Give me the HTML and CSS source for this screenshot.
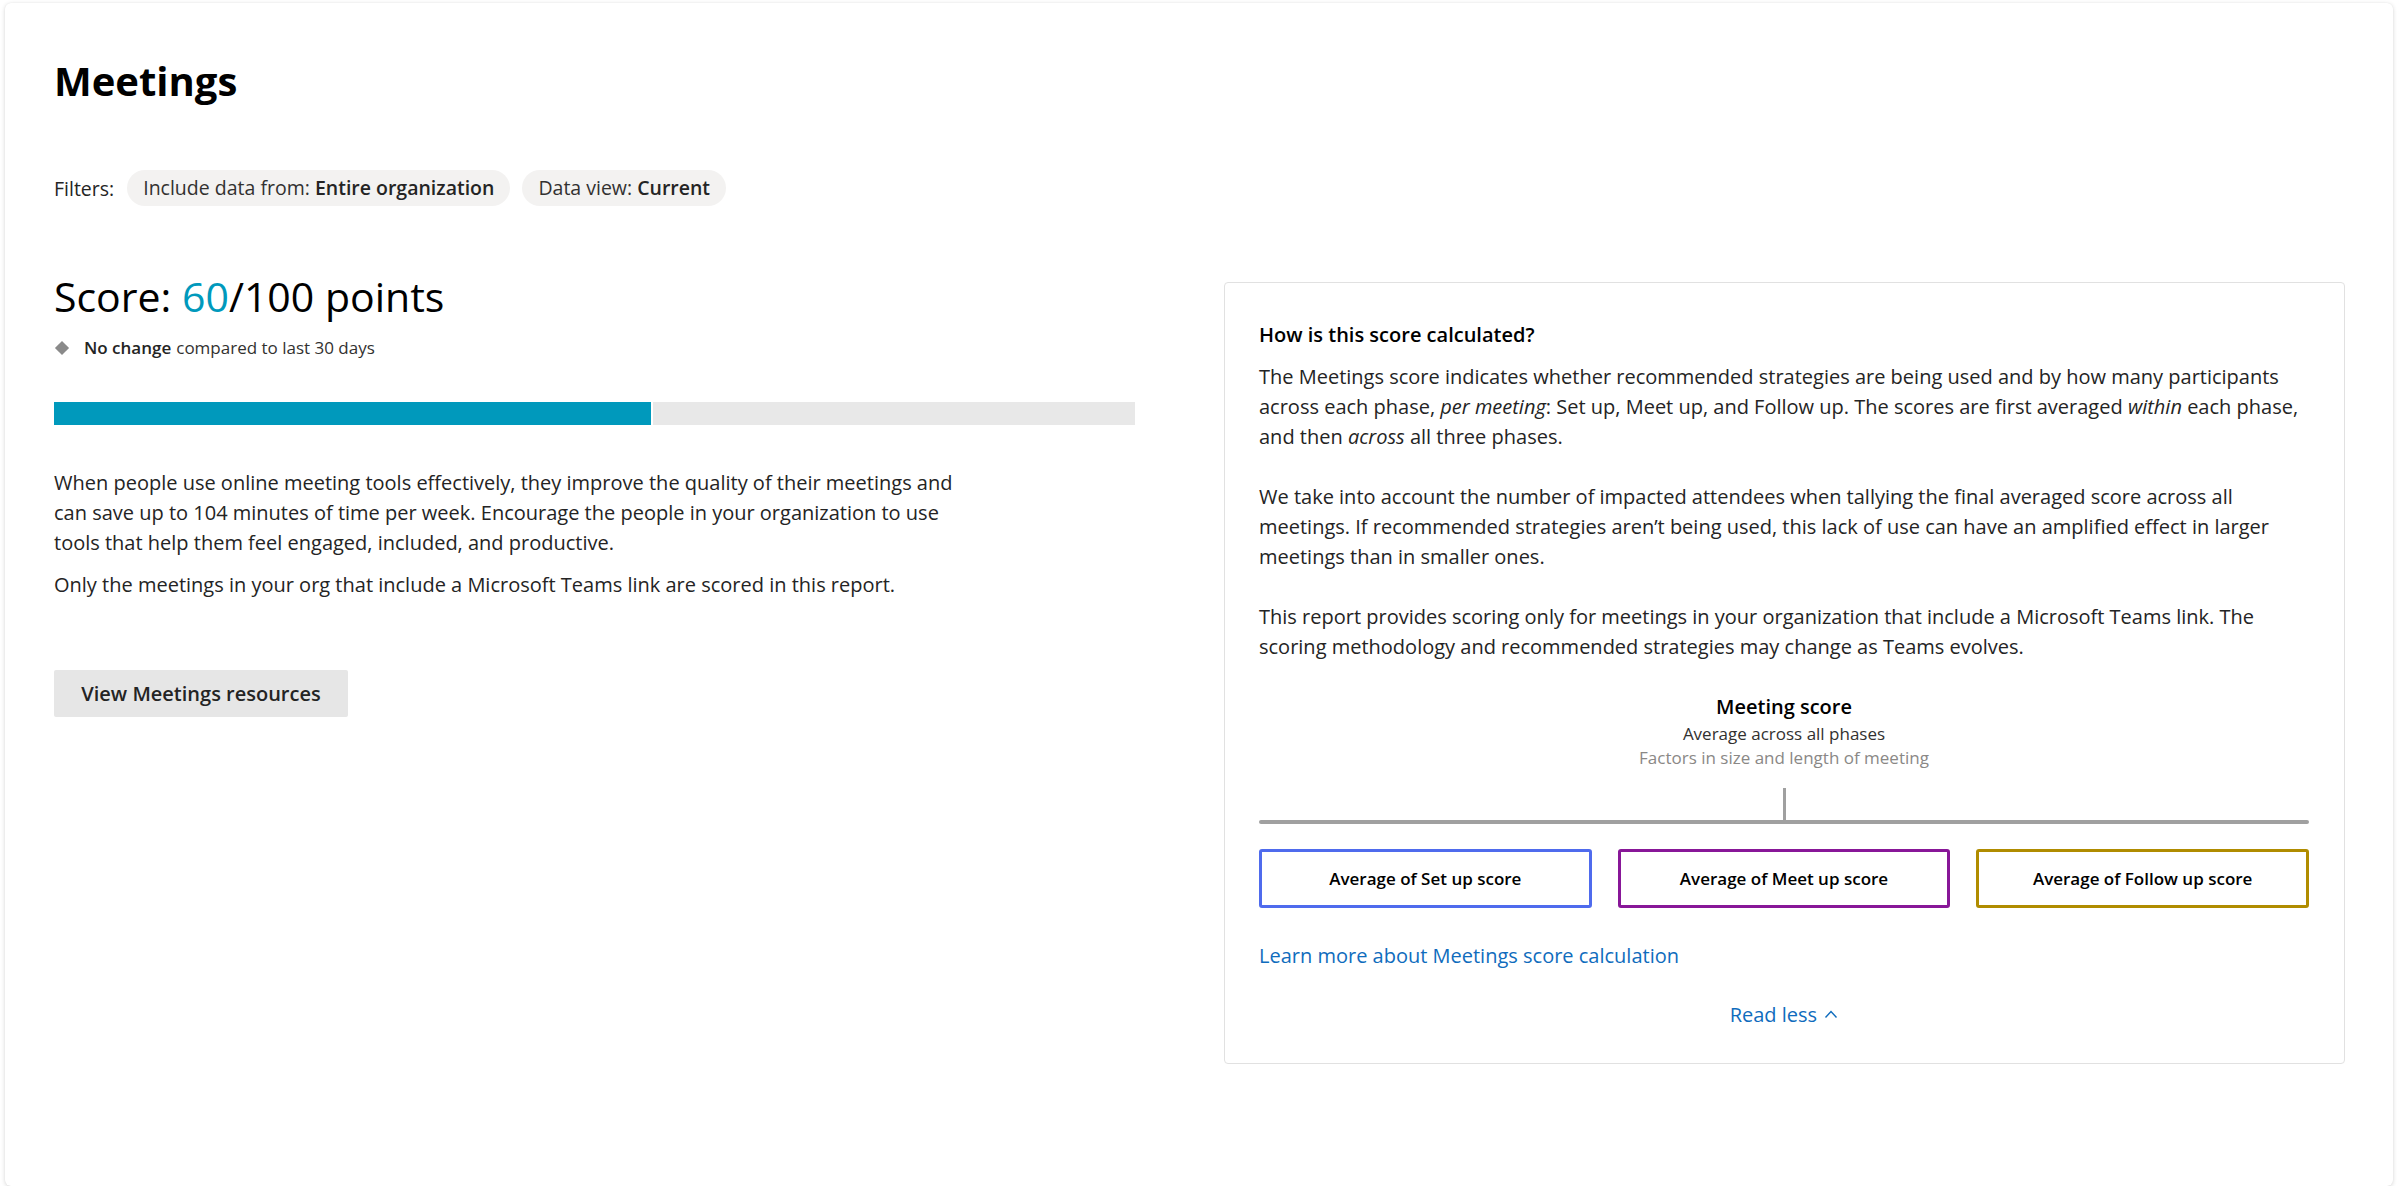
FILE: index.html
```html
<!DOCTYPE html>
<html lang="en">
<head>
<meta charset="utf-8">
<title>Meetings</title>
<link rel="stylesheet" href="styles.css">
</head>
<body>
<main class="page">
  <h1 class="title">Meetings</h1>
  <div class="filters">
    <span class="filters-label">Filters:</span>
    <span class="pill">Include data from: <b>Entire organization</b></span>
    <span class="pill">Data view: <b>Current</b></span>
  </div>
  <div class="columns">
    <section class="left">
      <h2 class="score">Score: <span class="score-num">60</span>/100 points</h2>
      <div class="change">
        <span class="diamond"></span>
        <b>No change</b> compared to last 30 days
      </div>
      <div class="bar"><div class="bar-fill" style="width:55.4%"></div></div>
      <p class="desc">When people use online meeting tools effectively, they improve the quality of their meetings and can save up to 104 minutes of time per week. Encourage the people in your organization to use tools that help them feel engaged, included, and productive.</p>
      <p class="desc">Only the meetings in your org that include a Microsoft Teams link are scored in this report.</p>
      <button class="btn">View Meetings resources</button>
    </section>
    <aside class="card">
      <h3 class="card-title">How is this score calculated?</h3>
      <p class="card-text">The Meetings score indicates whether recommended strategies are being used and by how many participants across each phase, <i>per meeting</i>: Set up, Meet up, and Follow up. The scores are first averaged <i>within</i> each phase, and then <i>across</i> all three phases.</p>
      <p class="card-text">We take into account the number of impacted attendees when tallying the final averaged score across all meetings. If recommended strategies aren’t being used, this lack of use can have an amplified effect in larger meetings than in smaller ones.</p>
      <p class="card-text">This report provides scoring only for meetings in your organization that include a Microsoft Teams link. The scoring methodology and recommended strategies may change as Teams evolves.</p>
      <div class="diagram">
        <div class="diag-title">Meeting score</div>
        <div class="diag-sub">Average across all phases</div>
        <div class="diag-note">Factors in size and length of meeting</div>
        <div class="stem"></div>
        <div class="hline"></div>
        <div class="boxes">
          <div class="box box-blue">Average of Set up score</div>
          <div class="box box-purple">Average of Meet up score</div>
          <div class="box box-gold">Average of Follow up score</div>
        </div>
      </div>
      <a class="link" href="#">Learn more about Meetings score calculation</a>
      <div class="readless"><a class="link" href="#">Read less <svg class="chev" width="14" height="10" viewBox="0 0 14 10"><path d="M1.5 8.5 L7 2.5 L12.5 8.5" fill="none" stroke="currentColor" stroke-width="1.4"/></svg></a></div>
    </aside>
  </div>
</main>
</body>
</html>
```
FILE: styles.css
```css
* { box-sizing: border-box; }
html, body { margin: 0; padding: 0; background: #ffffff; }
body {
  font-family: "Open Sans", "Noto Sans", sans-serif;
  color: #242424;
}
.page {
  margin: 3px 6px 0 5px;
  height: 1183px;
  border-radius: 6px;
  box-shadow: 0 1px 4px rgba(0,0,0,0.16), 0 0 1px rgba(0,0,0,0.08);
  padding: 54px 48px 0 49px;
}
.title {
  margin: 0;
  font-size: 40px;
  font-weight: 700;
  line-height: 48px;
  color: #000;
}
.filters {
  margin-top: 65px;
  display: flex;
  align-items: center;
  gap: 12px;
  font-size: 19.5px;
}
.filters-label { color: #242424; margin-right: 1px; }
.pill {
  background: #f3f2f1;
  border-radius: 18px;
  height: 36px;
  line-height: 36px;
  padding: 0 16px;
  color: #323130;
}
.pill b { font-weight: 600; color: #242424; }
.columns {
  margin-top: 76px;
  display: grid;
  grid-template-columns: 1081px 1fr;
  column-gap: 89px;
  align-items: start;
}
.score {
  margin: -14px 0 0;
  font-size: 41px;
  font-weight: 400;
  line-height: 56px;
  color: #000;
}
.score-num { color: #0099bc; font-weight: 500; }
.change {
  display: flex;
  align-items: center;
  font-size: 17px;
  color: #323130;
  margin-top: 12px;
}
.change b { font-weight: 600; color: #242424; margin-right: 5px; }
.diamond {
  width: 10px; height: 10px;
  background: #8a8a8a;
  transform: rotate(45deg);
  margin: 0 17px 0 3px;
}
.bar {
  margin-top: 43px;
  height: 23px;
  background: #e8e8e8;
  display: flex;
}
.bar-fill {
  background: #0099bc;
  height: 100%;
  border-right: 2px solid #fff;
}
.desc {
  max-width: 915px;
  margin: 43px 0 0;
  font-size: 20px;
  line-height: 30px;
  color: #242424;
}
.desc + .desc { margin-top: 12px; }
.btn {
  margin-top: 70px;
  width: 294px;
  height: 47px;
  border: none;
  border-radius: 2px;
  background: #e6e6e6;
  font-family: inherit;
  font-size: 20px;
  font-weight: 600;
  color: #242424;
}
.card {
  border: 1px solid #e1e1e1;
  border-radius: 4px;
  padding: 37px 35px 36px 34px;
  height: 782px;
}
.card-title {
  margin: 0;
  font-size: 20px;
  font-weight: 600;
  line-height: 30px;
  color: #000;
}
.card-text {
  margin: 12px 0 0;
  font-size: 20px;
  line-height: 30px;
  color: #242424;
}
.card-text + .card-text { margin-top: 30px; }
.diagram {
  margin-top: 30px;
  display: flex;
  flex-direction: column;
  align-items: center;
}
.diag-title { font-size: 20px; font-weight: 600; line-height: 30px; color: #000; }
.diag-sub { font-size: 17px; line-height: 24px; color: #323130; }
.diag-note { font-size: 17px; line-height: 24px; color: #8a8886; }
.stem { width: 3px; height: 32px; background: #a0a0a0; margin-top: 18px; }
.hline { width: 100%; height: 4px; background: #a0a0a0; border-radius: 2px; }
.boxes {
  width: 100%;
  margin-top: 25px;
  display: grid;
  grid-template-columns: 1fr 1fr 1fr;
  gap: 26px;
}
.box {
  height: 59px;
  border: 3px solid;
  border-radius: 3px;
  display: flex;
  align-items: center;
  justify-content: center;
  font-size: 17px;
  font-weight: 600;
  color: #000;
}
.box-blue { border-color: #4f6bed; }
.box-purple { border-color: #881798; }
.box-gold { border-color: #b08c00; }
.link {
  display: inline-block;
  margin-top: 34px;
  font-size: 20px;
  line-height: 28px;
  color: #0f6cbd;
  text-decoration: none;
}
.readless { text-align: center; margin-top: 31px; }
.readless .link { margin-top: 0; }
.chev { vertical-align: 3px; margin-left: 2px; }
```
